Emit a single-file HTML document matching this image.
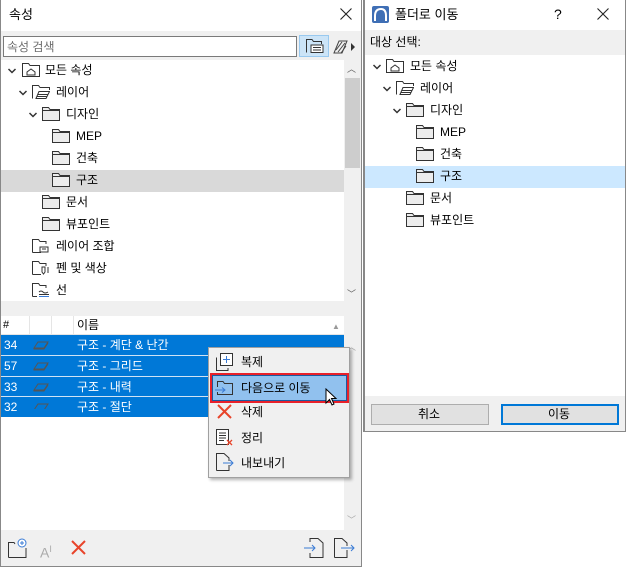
<!DOCTYPE html>
<html><head><meta charset="utf-8"><style>
*{margin:0;padding:0;box-sizing:border-box}
body{width:626px;height:567px;background:#fff;position:relative;overflow:hidden;font-family:"Liberation Sans","Noto Sans CJK KR",sans-serif;font-size:12px;color:#000}
.a{position:absolute}
.t{position:absolute;white-space:nowrap;line-height:14px}
.fold{position:absolute;width:18px;height:14px}
</style></head><body>
<svg width="0" height="0" style="position:absolute"><defs>
<symbol id="f" viewBox="0 0 18 14"><path d="M0.5 13.5V0.5H6.5L8 2.5H17.5V13.5Z" fill="#ececec" stroke="#333"/><path d="M0.5 3.5H17.5" stroke="#333"/></symbol>
<symbol id="chev" viewBox="0 0 10 10"><path d="M1.5 3L5 6.5L8.5 3" fill="none" stroke="#333" stroke-width="1.5"/></symbol>
</defs></svg>

<!-- LEFT PANEL -->
<div class="a" style="left:0;top:0;width:362px;height:567px;border:1px solid #888;border-top:none;background:#fff"></div>
<div class="t" style="left:9px;top:8px;font-size:13px">속성</div>
<svg class="a" style="left:340px;top:8px" width="12" height="12"><path d="M0.5 0.5L11.5 11.5M11.5 0.5L0.5 11.5" stroke="#222" stroke-width="1.1"/></svg>
<div class="a" style="left:1px;top:31px;width:360px;height:29px;background:#f0f0f0"></div>
<div class="a" style="left:3px;top:36px;width:294px;height:21px;background:#fff;border:1px solid #7a7a7a"></div>
<div class="t" style="left:7px;top:40px;color:#6d6d6d">속성 검색</div>
<div class="a" style="left:299px;top:35px;width:30px;height:22px;background:#cce4f7;border:1px solid #99c9ef"></div>
<svg class="a" style="left:306px;top:39px" width="18" height="14"><path d="M0.5 13.5V0.5H6L7.5 2.5H15.5V5" fill="none" stroke="#333"/><rect x="5" y="6" width="12" height="7.5" fill="#fff" stroke="#333"/><path d="M7 8.5H15M7 11H15" stroke="#333"/></svg>
<svg class="a" style="left:333px;top:40px" width="26" height="14"><path d="M1 13L6 1H14L9 13Z" fill="none" stroke="#444"/><path d="M3 10L9 2M5 12L12 3M8 13L13 6" stroke="#444"/><path d="M18 3L22 7L18 11Z" fill="#333"/></svg>

<!-- tree -->
<div class="a" style="left:344px;top:60px;width:17px;height:241px;background:#f0f0f0"></div>
<div class="a" style="left:345px;top:78px;width:15px;height:90px;background:#cdcdcd"></div>
<div class="t" style="left:347px;top:62px;font-size:9px;color:#606060">︿</div>
<div class="t" style="left:347px;top:287px;font-size:9px;color:#606060">﹀</div>
<div class="a" style="left:1px;top:170px;width:343px;height:22px;background:#d9d9d9"></div>

<svg class="a" style="left:7px;top:66px" width="10" height="10"><use href="#chev"/></svg>
<svg class="fold" style="left:22px;top:63px"><path d="M0.5 13.5V0.5H6.5L8 2.5H17.5V13.5Z" fill="#fff" stroke="#333"/><path d="M5 12V9L9 6L13 9V12Z" fill="none" stroke="#333"/></svg>
<div class="t" style="left:45px;top:63px">모든 속성</div>
<svg class="a" style="left:18px;top:88px" width="10" height="10"><use href="#chev"/></svg>
<svg class="fold" style="left:32px;top:85px"><path d="M0.5 13.5V0.5H6.5L8 2.5H17.5V5" fill="#fff" stroke="#333"/><path d="M4 13.5L7 6.5H17.5L14 13.5Z M5 11.5H15 M6 9.5H16" fill="none" stroke="#333"/></svg>
<div class="t" style="left:56px;top:85px">레이어</div>
<svg class="a" style="left:28px;top:110px" width="10" height="10"><use href="#chev"/></svg>
<svg class="fold" style="left:42px;top:107px"><use href="#f"/></svg>
<div class="t" style="left:66px;top:107px">디자인</div>
<svg class="fold" style="left:52px;top:129px"><use href="#f"/></svg>
<div class="t" style="left:76px;top:129px">MEP</div>
<svg class="fold" style="left:52px;top:151px"><use href="#f"/></svg>
<div class="t" style="left:76px;top:151px">건축</div>
<svg class="fold" style="left:52px;top:173px"><use href="#f"/></svg>
<div class="t" style="left:76px;top:173px">구조</div>
<svg class="fold" style="left:42px;top:195px"><use href="#f"/></svg>
<div class="t" style="left:66px;top:195px">문서</div>
<svg class="fold" style="left:42px;top:217px"><use href="#f"/></svg>
<div class="t" style="left:66px;top:217px">뷰포인트</div>
<svg class="fold" style="left:32px;top:239px"><path d="M0.5 13.5V0.5H6.5L8 2.5H14V5" fill="#fff" stroke="#333"/><path d="M0.5 13.5H9 M8 13V8H16V13Z M10 10H14" fill="none" stroke="#333"/></svg>
<div class="t" style="left:56px;top:239px">레이어 조합</div>
<svg class="fold" style="left:32px;top:261px"><path d="M0.5 13.5V0.5H6.5L8 2.5H14V5 M0.5 13.5H9" fill="none" stroke="#333"/><path d="M10 6V11L11.5 13L13 11V6Z" fill="none" stroke="#333"/><path d="M15 7H17M15 9H17M15 11H17" stroke="#333"/></svg>
<div class="t" style="left:56px;top:261px">펜 및 색상</div>
<svg class="fold" style="left:32px;top:283px"><path d="M0.5 13.5V0.5H6.5L8 2.5H14V5 M0.5 13.5H5" fill="none" stroke="#333"/><path d="M7 9Q9 7 11 9T16 9M7 11.5H17" fill="none" stroke="#333"/><path d="M7 13.5H17" stroke="#3a7bd5"/></svg>
<div class="t" style="left:56px;top:283px">선</div>

<div class="a" style="left:1px;top:301px;width:360px;height:15px;background:#f0f0f0"></div>

<!-- table -->
<div class="a" style="left:1px;top:316px;width:343px;height:19px;background:#fff;border-bottom:1px solid #e5e5e5"></div>
<div class="a" style="left:29px;top:316px;width:1px;height:19px;background:#e5e5e5"></div>
<div class="a" style="left:51px;top:316px;width:1px;height:19px;background:#e5e5e5"></div>
<div class="a" style="left:73px;top:316px;width:1px;height:19px;background:#e5e5e5"></div>
<div class="t" style="left:3px;top:318px;font-size:11px">#</div>
<div class="t" style="left:77px;top:318px">이름</div>
<div class="t" style="left:332px;top:320px;font-size:8px;color:#999">▲</div>
<div class="a" style="left:344px;top:316px;width:17px;height:214px;background:#f0f0f0"></div>
<div class="t" style="left:347px;top:340px;font-size:9px;color:#aaa">︿</div>
<div class="t" style="left:347px;top:513px;font-size:9px;color:#aaa">﹀</div>

<div class="a" style="left:1px;top:335px;width:343px;height:82px;background:#0078d7"></div>
<div class="a" style="left:1px;top:355px;width:343px;height:1px;background:#cfe3f5"></div>
<div class="a" style="left:1px;top:376px;width:343px;height:1px;background:#cfe3f5"></div>
<div class="a" style="left:1px;top:396px;width:343px;height:1px;background:#cfe3f5"></div>
<div class="t" style="left:4px;top:338px;color:#fff">34</div>
<div class="t" style="left:4px;top:359px;color:#fff">57</div>
<div class="t" style="left:4px;top:380px;color:#fff">33</div>
<div class="t" style="left:4px;top:400px;color:#fff">32</div>
<svg class="a" style="left:33px;top:339px" width="16" height="70"><g fill="none" stroke="#555"><path d="M1 9L5 3H15L11 9Z M1 7.5"/><path d="M1 9V10H11L15 4" /><path d="M1 30L5 24H15L11 30ZM1 30V31H11L15 25"/><path d="M1 51L5 45H15L11 51ZM1 51V52H11L15 46"/><path d="M1 71L5 65H15L11 71Z"/></g></svg>
<div class="t" style="left:77px;top:338px;color:#fff">구조 - 계단 &amp; 난간</div>
<div class="t" style="left:77px;top:359px;color:#fff">구조 - 그리드</div>
<div class="t" style="left:77px;top:380px;color:#fff">구조 - 내력</div>
<div class="t" style="left:77px;top:400px;color:#fff">구조 - 절단</div>

<!-- bottom toolbar -->
<div class="a" style="left:1px;top:530px;width:360px;height:36px;background:#f0f0f0"></div>
<svg class="a" style="left:8px;top:538px" width="20" height="20"><path d="M0.5 19.5V4.5H6L7 6" fill="none" stroke="#333"/><path d="M0.5 19.5H18V10" fill="none" stroke="#333"/><circle cx="14" cy="5" r="4" fill="#fff" stroke="#3a7bd5"/><path d="M14 3V7M12 5H16" stroke="#3a7bd5"/></svg>
<div class="t" style="left:40px;top:542px;font-size:14px;color:#aaa">A<sup style="font-size:9px">I</sup></div>
<svg class="a" style="left:71px;top:540px" width="15" height="15"><path d="M1 1L14 14M14 1L1 14" stroke="#e8442a" stroke-width="2"/></svg>
<svg class="a" style="left:304px;top:538px" width="20" height="20"><path d="M6 4V0.5H14L19 5V19.5H6V15" fill="none" stroke="#333"/><path d="M0 10H11M8 7L11 10L8 13" fill="none" stroke="#3a7bd5"/></svg>
<svg class="a" style="left:334px;top:538px" width="22" height="20"><path d="M0.5 19.5V0.5H8L13 5V8 M13 12V19.5H0.5" fill="none" stroke="#333"/><path d="M7 10H20M17 7L20 10L17 13" fill="none" stroke="#3a7bd5"/></svg>

<!-- context menu -->
<div class="a" style="left:208px;top:347px;width:142px;height:131px;background:#f0f0f0;border:1px solid #a0a0a0;box-shadow:2px 2px 3px rgba(0,0,0,.3)"></div>
<svg class="a" style="left:216px;top:353px" width="18" height="18"><path d="M0.5 4.5V17.5H12V15" fill="none" stroke="#333"/><rect x="4.5" y="0.5" width="12" height="12" fill="#fff" stroke="#333"/><path d="M10.5 3V10M7 6.5H14" stroke="#3a7bd5"/></svg>
<div class="t" style="left:241px;top:355px">복제</div>
<div class="a" style="left:210px;top:373px;width:139px;height:30px;border:2px solid #e8202a"></div>
<div class="a" style="left:212px;top:375px;width:135px;height:26px;background:#91c1ee;border:1px solid #1a5aa0"></div>
<svg class="a" style="left:215px;top:381px" width="18" height="14"><path d="M2.5 6V0.5H8L9.5 2.5H17.5V13.5H2.5V11" fill="none" stroke="#333"/><path d="M0 9H10M7 6.5L10 9L7 11.5" fill="none" stroke="#3a7bd5"/></svg>
<div class="t" style="left:241px;top:381px">다음으로 이동</div>
<svg class="a" style="left:325px;top:388px" width="14" height="20"><path d="M1 1V15L4.5 11.5L7 17L9 16L6.5 10.5H11Z" fill="#fff" stroke="#000"/></svg>
<svg class="a" style="left:217px;top:404px" width="15" height="15"><path d="M1 1L14 14M14 1L1 14" stroke="#e8442a" stroke-width="2"/></svg>
<div class="t" style="left:241px;top:405px">삭제</div>
<svg class="a" style="left:216px;top:429px" width="18" height="17"><rect x="0.5" y="0.5" width="12" height="15" fill="#fff" stroke="#333"/><path d="M3 4H10M3 6.5H10M3 9H10M3 11.5H8" stroke="#333"/><path d="M11 11L16 16M16 11L11 16" stroke="#e8442a" stroke-width="1.3"/></svg>
<div class="t" style="left:241px;top:431px">정리</div>
<svg class="a" style="left:216px;top:453px" width="18" height="18"><path d="M0.5 17.5V0.5H8L13 5V8 M13 12V17.5H0.5" fill="none" stroke="#333"/><path d="M7 10H17M14 7L17 10L14 13" fill="none" stroke="#3a7bd5"/></svg>
<div class="t" style="left:241px;top:456px">내보내기</div>

<!-- RIGHT DIALOG -->
<div class="a" style="left:363px;top:0;width:263px;height:432px;background:#fff;border:1px solid #888;border-left:2px solid #888;border-top:none"></div>
<svg class="a" style="left:372px;top:6px" width="17" height="17"><rect width="17" height="17" rx="2" fill="#3f6fb5"/><path d="M3 15V10Q3 3 9 3Q14 3 14 10V15" fill="none" stroke="#fff" stroke-width="2"/></svg>
<div class="t" style="left:395px;top:8px;font-size:13px">폴더로 이동</div>
<div class="t" style="left:554px;top:7px;font-size:14px">?</div>
<svg class="a" style="left:597px;top:8px" width="12" height="12"><path d="M0.5 0.5L11.5 11.5M11.5 0.5L0.5 11.5" stroke="#222" stroke-width="1.1"/></svg>
<div class="a" style="left:365px;top:30px;width:260px;height:25px;background:#f0f0f0"></div>
<div class="t" style="left:370px;top:35px">대상 선택:</div>
<div class="a" style="left:365px;top:166px;width:260px;height:22px;background:#cce8ff"></div>

<svg class="a" style="left:372px;top:62px" width="10" height="10"><use href="#chev"/></svg>
<svg class="fold" style="left:386px;top:59px"><path d="M0.5 13.5V0.5H6.5L8 2.5H17.5V13.5Z" fill="#fff" stroke="#333"/><path d="M5 12V9L9 6L13 9V12Z" fill="none" stroke="#333"/></svg>
<div class="t" style="left:410px;top:59px">모든 속성</div>
<svg class="a" style="left:382px;top:84px" width="10" height="10"><use href="#chev"/></svg>
<svg class="fold" style="left:396px;top:81px"><path d="M0.5 13.5V0.5H6.5L8 2.5H17.5V5" fill="#fff" stroke="#333"/><path d="M4 13.5L7 6.5H17.5L14 13.5Z M5 11.5H15 M6 9.5H16" fill="none" stroke="#333"/></svg>
<div class="t" style="left:420px;top:81px">레이어</div>
<svg class="a" style="left:392px;top:106px" width="10" height="10"><use href="#chev"/></svg>
<svg class="fold" style="left:406px;top:103px"><use href="#f"/></svg>
<div class="t" style="left:430px;top:103px">디자인</div>
<svg class="fold" style="left:416px;top:125px"><use href="#f"/></svg>
<div class="t" style="left:440px;top:125px">MEP</div>
<svg class="fold" style="left:416px;top:147px"><use href="#f"/></svg>
<div class="t" style="left:440px;top:147px">건축</div>
<svg class="fold" style="left:416px;top:169px"><use href="#f"/></svg>
<div class="t" style="left:440px;top:169px">구조</div>
<svg class="fold" style="left:406px;top:191px"><use href="#f"/></svg>
<div class="t" style="left:430px;top:191px">문서</div>
<svg class="fold" style="left:406px;top:213px"><use href="#f"/></svg>
<div class="t" style="left:430px;top:213px">뷰포인트</div>

<div class="a" style="left:365px;top:396px;width:260px;height:35px;background:#f0f0f0"></div>
<div class="a" style="left:371px;top:404px;width:118px;height:21px;background:#e1e1e1;border:1px solid #adadad"></div>
<div class="t" style="left:418px;top:407px">취소</div>
<div class="a" style="left:501px;top:404px;width:118px;height:21px;background:#e1e1e1;border:2px solid #0078d7"></div>
<div class="t" style="left:548px;top:407px">이동</div>
</body></html>
